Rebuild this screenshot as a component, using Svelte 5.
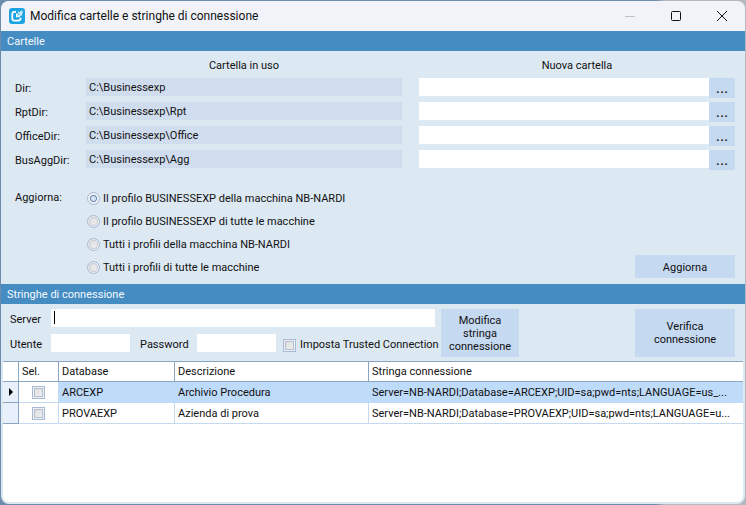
<script lang="ts">
  interface Folder {
    id: string;
    label: string;
    current: string;
    next: string;
  }

  interface Connection {
    selected: boolean;
    database: string;
    description: string;
    value: string;
  }

  let folders = $state<Folder[]>([
    { id: 'dir', label: 'Dir:', current: 'C:\\Businessexp', next: '' },
    { id: 'rpt', label: 'RptDir:', current: 'C:\\Businessexp\\Rpt', next: '' },
    { id: 'office', label: 'OfficeDir:', current: 'C:\\Businessexp\\Office', next: '' },
    { id: 'agg', label: 'BusAggDir:', current: 'C:\\Businessexp\\Agg', next: '' }
  ]);

  const scopes = [
    'Il profilo BUSINESSEXP della macchina NB-NARDI',
    'Il profilo BUSINESSEXP di tutte le macchine',
    'Tutti i profili della macchina NB-NARDI',
    'Tutti i profili di tutte le macchine'
  ];

  let connections = $state<Connection[]>([
    {
      selected: false,
      database: 'ARCEXP',
      description: 'Archivio Procedura',
      value: 'Server=NB-NARDI;Database=ARCEXP;UID=sa;pwd=nts;LANGUAGE=us_...'
    },
    {
      selected: false,
      database: 'PROVAEXP',
      description: 'Azienda di prova',
      value: 'Server=NB-NARDI;Database=PROVAEXP;UID=sa;pwd=nts;LANGUAGE=u...'
    }
  ]);

  let scope = $state(0);
  let current = $state(0);
  let server = $state('');
  let user = $state('');
  let password = $state('');
  let trusted = $state(false);
</script>

<div class="desktop">
  <main class="window">
    <header class="titlebar">
      <svg class="logo" width="16" height="16" viewBox="0 0 16 16" aria-hidden="true">
        <rect width="16" height="16" rx="3" fill="#1ba3e2" />
        <path
          d="M7 3.9H5.3Q3.3 3.9 3.3 5.9V10.5Q3.3 12.6 5.4 12.6H9.2Q11.6 12.6 11.8 9.8"
          fill="none" stroke="#fff" stroke-width="1.8"
        />
        <path d="M7 9.2V5.2L8.5 6.2L9.3 3.3L10.7 4.4L12.6 1.8L12.8 3.8L14.5 3.5L12.6 6L13.4 7.2L10.4 8L11.3 9.2Z" fill="#fff" />
        <path d="M8 8.3L13.2 3.2M9.4 4.6V6.8H11.8" fill="none" stroke="#5bbcea" stroke-width="0.8" />
      </svg>
      <h1>Modifica cartelle e stringhe di connessione</h1>
      <div class="controls">
        <button type="button" aria-label="Riduci a icona" disabled>
          <svg width="10" height="10" viewBox="0 0 10 10"><path d="M0 5.5H10" stroke="#bfc1c6" /></svg>
        </button>
        <button type="button" aria-label="Ingrandisci">
          <svg width="10" height="10" viewBox="0 0 10 10">
            <rect x="0.5" y="0.5" width="9" height="9" rx="1" fill="none" stroke="#111" />
          </svg>
        </button>
        <button type="button" aria-label="Chiudi">
          <svg width="10" height="10" viewBox="0 0 10 10"><path d="M0 0L10 10M10 0L0 10" stroke="#111" /></svg>
        </button>
      </div>
    </header>

    <h2>Cartelle</h2>
    <section class="folders">
      <div class="folder-grid">
        <span></span>
        <span class="heading">Cartella in uso</span>
        <span class="heading">Nuova cartella</span>
        {#each folders as folder (folder.id)}
          <label for={folder.id}>{folder.label}</label>
          <output class="current">{folder.current}</output>
          <div class="picker">
            <input id={folder.id} type="text" bind:value={folder.next} />
            <button type="button" aria-label="Sfoglia">...</button>
          </div>
        {/each}
      </div>

      <div class="update">
        <span class="update-label" id="scope-label">Aggiorna:</span>
        <div class="scopes" role="radiogroup" aria-labelledby="scope-label">
          {#each scopes as text, index (text)}
            <label>
              <input type="radio" name="scope" value={index} bind:group={scope} />
              {text}
            </label>
          {/each}
        </div>
        <button type="button" class="action">Aggiorna</button>
      </div>
    </section>

    <h2>Stringhe di connessione</h2>
    <section class="connection">
      <div class="fields">
        <div class="line">
          <label for="server">Server</label>
          <input id="server" class="server" type="text" bind:value={server} />
        </div>
        <div class="line">
          <label for="user">Utente</label>
          <input id="user" type="text" bind:value={user} />
          <label for="password" class="password">Password</label>
          <input id="password" type="password" bind:value={password} />
          <label class="trusted">
            <input type="checkbox" bind:checked={trusted} />
            Imposta Trusted Connection
          </label>
        </div>
      </div>
      <button type="button" class="edit">Modifica stringa connessione</button>
      <button type="button" class="verify">Verifica connessione</button>
    </section>

    <div class="grid">
      <table>
        <colgroup>
          <col class="c-mark" />
          <col class="c-sel" />
          <col class="c-db" />
          <col class="c-desc" />
          <col />
        </colgroup>
        <thead>
          <tr>
            <th></th>
            <th>Sel.</th>
            <th>Database</th>
            <th>Descrizione</th>
            <th>Stringa connessione</th>
          </tr>
        </thead>
        <tbody>
          {#each connections as row, index (row.database)}
            <tr class:active={index === current} onclick={() => { current = index; }}>
              <td class="mark">
                {#if index === current}
                  <svg width="4" height="8" viewBox="0 0 4 8"><path d="M0 0L4 4L0 8Z" /></svg>
                {/if}
              </td>
              <td class="sel">
                <input type="checkbox" aria-label={row.database} bind:checked={row.selected} />
              </td>
              <td>{row.database}</td>
              <td>{row.description}</td>
              <td>{row.value}</td>
            </tr>
          {/each}
        </tbody>
      </table>
    </div>
  </main>
</div>

<style>
  :global(body) {
    margin: 0;
    background: #7792ae;
  }

  .desktop {
    box-sizing: border-box;
    display: flex;
    min-height: 100vh;
    padding: 1px;
    background: linear-gradient(90deg, #6d8cab 0 88%, #b4b8bf 89%);
    font-family: Tahoma, Roboto, sans-serif;
    font-size: 11px;
    line-height: 13px;
    color: #111;
  }

  .window {
    display: flex;
    flex-direction: column;
    flex: 1;
    min-width: 0;
    overflow: hidden;
    border-radius: 8px;
    background: #dce8f2;
  }

  .titlebar {
    display: flex;
    align-items: center;
    height: 30px;
    padding-left: 8px;
    background: #f1f3f9;
  }

  h1 {
    flex: 1;
    margin: 0 0 0 5px;
    font-size: 12px;
    font-weight: 400;
    line-height: 16px;
    white-space: nowrap;
  }

  .controls {
    display: flex;
  }

  .controls button {
    display: flex;
    align-items: center;
    justify-content: center;
    width: 46px;
    height: 30px;
    background: transparent;
  }

  h2 {
    margin: 0;
    padding: 2px 0 0 6px;
    background: #458cc3;
    color: #f4faff;
    font-size: 11px;
    font-weight: 400;
    line-height: 18px;
  }

  button {
    padding: 0;
    border: 0;
    background: #c5d9f1;
    color: inherit;
    font: inherit;
  }

  input {
    margin: 0;
    font: inherit;
  }

  input[type='text'],
  input[type='password'] {
    box-sizing: border-box;
    height: 18px;
    padding: 0 3px;
    border: 0;
    border-radius: 0;
    outline: none;
    background-color: #fff;
  }

  .folders {
    padding: 3px 10px 6px 14px;
  }

  .folder-grid {
    display: grid;
    grid-template-columns: 54px minmax(0, 1fr) minmax(0, 1fr);
    grid-auto-rows: 20px;
    gap: 4px 17px;
  }

  .folder-grid label {
    line-height: 22px;
    white-space: nowrap;
  }

  .heading {
    line-height: 24px;
    text-align: center;
  }

  .current {
    height: 18px;
    padding-left: 3px;
    background: #d0ddee;
    line-height: 20px;
  }

  .picker {
    display: flex;
    align-items: flex-start;
  }

  .picker input {
    flex: 1;
    min-width: 0;
  }

  .picker button {
    width: 26px;
    height: 20px;
    font-size: 16px;
    line-height: 16px;
  }

  .update {
    display: flex;
    margin-top: 16px;
  }

  .update-label {
    width: 71px;
    line-height: 24px;
  }

  .scopes {
    display: flex;
    flex: 1;
    flex-direction: column;
  }

  .scopes label {
    box-sizing: border-box;
    display: flex;
    align-items: center;
    gap: 3px;
    height: 23px;
    padding: 2px 0 0 1px;
  }

  input[type='radio'],
  input[type='checkbox'] {
    box-sizing: border-box;
    flex: none;
    width: 13px;
    height: 13px;
    appearance: none;
    border: 1px solid #a9b9d2;
    background: linear-gradient(135deg, #d9dade, #f3f3f4);
    box-shadow: inset 0 0 0 1px #edf2f8, inset 0 0 0 2px #b7bdc9;
  }

  input[type='radio'] {
    border-radius: 50%;
    box-shadow: inset 0 0 0 1px #edf2f8, inset 0 0 0 2px #c6c9d0;
  }

  input[type='radio']:checked {
    background: radial-gradient(circle, #d5e4f5 0 2px, #6785ae 3px, #edf2f8 4px);
    box-shadow: none;
  }

  input[type='checkbox']:checked {
    background: #6785ae;
  }

  .action {
    align-self: flex-end;
    width: 100px;
    height: 23px;
    padding-top: 2px;
  }

  .connection {
    display: flex;
    padding: 5px 10px 4px 9px;
  }

  .fields {
    display: flex;
    flex: 1;
    flex-direction: column;
    gap: 7px;
    max-width: 425px;
  }

  .line {
    display: flex;
  }

  .line > label {
    flex: none;
    width: 41px;
    height: 18px;
    line-height: 22px;
  }

  .line > input {
    width: 79px;
  }

  .line .password {
    width: 57px;
    padding-left: 10px;
  }

  .line .server {
    flex: 1;
    background-image: linear-gradient(#000, #000);
    background-position: 3px 2px;
    background-repeat: no-repeat;
    background-size: 1px 13px;
    caret-color: transparent;
  }

  .line .trusted {
    display: flex;
    align-items: center;
    gap: 4px;
    width: auto;
    height: 22px;
    margin-bottom: -4px;
    padding-left: 7px;
    white-space: nowrap;
  }

  .edit,
  .verify {
    flex: none;
    height: 48px;
  }

  .edit {
    width: 78px;
    margin-left: 6px;
    padding: 0 6px;
  }

  .verify {
    width: 100px;
    margin-left: auto;
    padding: 0 10px;
  }

  .grid {
    flex: 1;
    margin: 0 2px 2px;
    border-top: 1px solid #8aa5c2;
    border-radius: 0 0 6px 6px;
    background: #fff;
  }

  table {
    width: 100%;
    border-collapse: separate;
    border-spacing: 0;
    table-layout: fixed;
  }

  .c-mark {
    width: 16px;
  }

  .c-sel {
    width: 40px;
  }

  .c-db {
    width: 116px;
  }

  .c-desc {
    width: 194px;
  }

  th,
  td {
    box-sizing: border-box;
    height: 21px;
    padding: 0 3px;
    overflow: hidden;
    border-right: 1px solid #c5d9f1;
    border-bottom: 1px solid #c5d9f1;
    font-weight: 400;
    text-align: left;
    text-overflow: ellipsis;
    white-space: nowrap;
  }

  th {
    height: 20px;
    border-color: #8aa5c2;
  }

  th:last-child,
  td:last-child {
    border-right: 0;
  }

  td.mark {
    padding: 0;
    border-color: #8aa5c2;
    background: #e8f1fb;
    text-align: center;
  }

  td.mark svg,
  td.sel input {
    display: block;
    margin: 0 auto;
  }

  .active td {
    border-color: #bfdbfa;
    background: #bfdbfa;
  }

  .active td.mark {
    border-color: #8aa5c2;
    background: #e8f1fb;
  }

  .active td.sel {
    border-color: #c5d9f1;
    background: #fff;
  }
</style>
